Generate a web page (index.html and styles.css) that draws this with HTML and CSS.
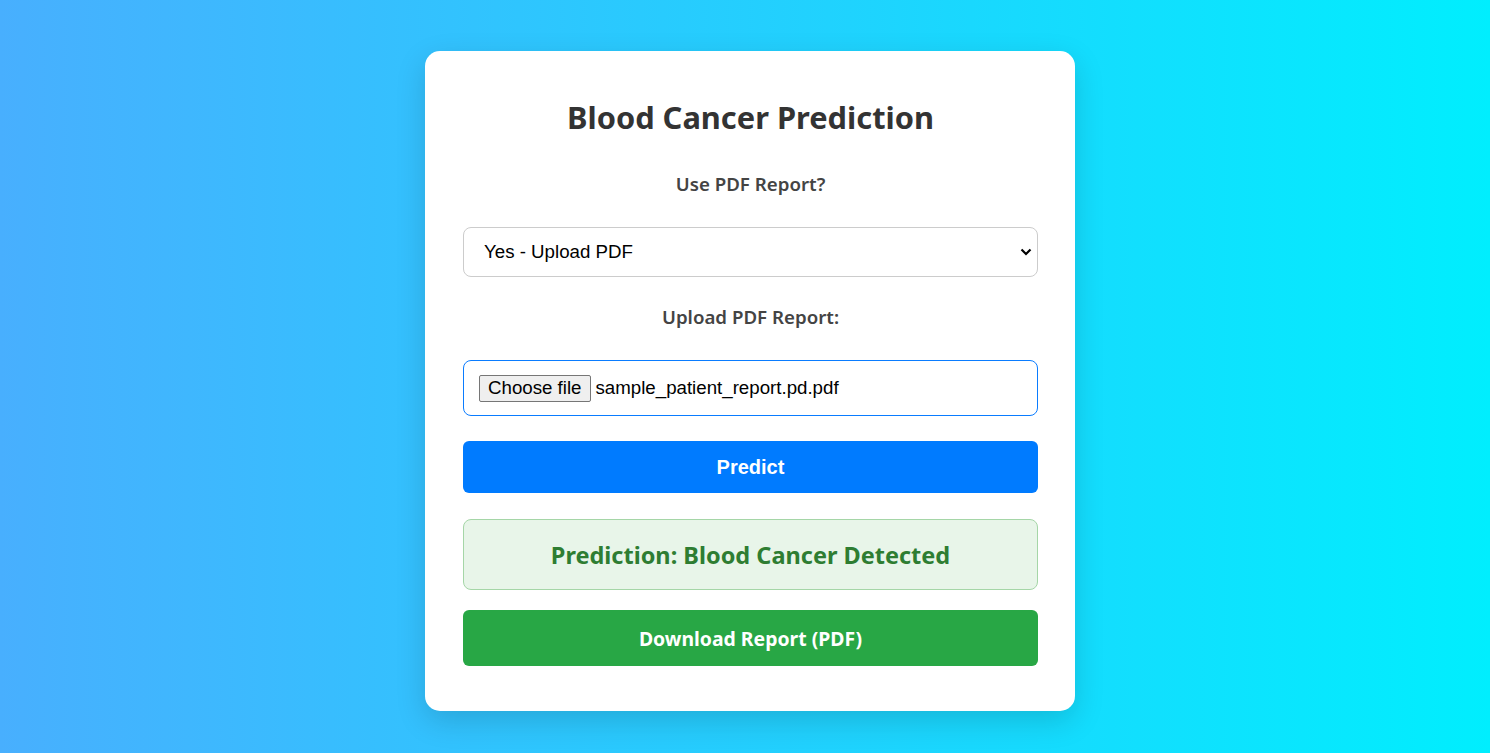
FILE: index.html
```html
<!DOCTYPE html>
<html lang="en">
<head>
<meta charset="utf-8">
<title>Blood Cancer Prediction</title>
<link rel="stylesheet" href="styles.css">
</head>
<body>
<div class="card">
  <h1 class="title">Blood Cancer Prediction</h1>
  <label class="label">Use PDF Report?</label>
  <div class="select-wrap">
    <select class="select">
      <option>Yes - Upload PDF</option>
      <option>No - Enter Manually</option>
    </select>
    <svg class="chev" width="12" height="8" viewBox="0 0 12 8"><path d="M1.5 1.5 L6 6 L10.5 1.5" fill="none" stroke="#000" stroke-width="2.2"/></svg>
  </div>
  <label class="label">Upload PDF Report:</label>
  <div class="file">
    <span class="file-btn">Choose file</span>
    <span class="file-name">sample_patient_report.pd.pdf</span>
  </div>
  <button class="btn btn-predict">Predict</button>
  <div class="result">Prediction: Blood Cancer Detected</div>
  <button class="btn btn-download">Download Report (PDF)</button>
</div>
</body>
</html>
```
FILE: styles.css
```css
html, body { margin: 0; padding: 0; }
body {
  min-height: 100vh;
  box-sizing: border-box;
  padding-left: 10px;
  background: linear-gradient(to right, #48affe, #00eefe);
  font-family: "Noto Sans", "Open Sans", sans-serif;
  overflow: hidden;
}
.card {
  width: 650px;
  box-sizing: border-box;
  margin: 51px auto 0;
  padding: 38px 37px 45px 38px;
  background: #fff;
  border-radius: 15px;
  box-shadow: 0 10px 30px rgba(0, 0, 0, 0.15);
  display: flex;
  flex-direction: column;
}
.title {
  margin: 6px 0 0;
  font-size: 30.8px;
  line-height: 44px;
  font-weight: 700;
  color: #333;
  text-align: center;
}
.label {
  display: block;
  text-align: center;
  font-size: 18.7px;
  line-height: 24px;
  font-weight: 600;
  color: #444;
  margin-top: 33px;
}
.label + .select-wrap, .label + .file { margin-top: 31px; }
.select-wrap { position: relative; }
.select {
  width: 100%;
  height: 50px;
  box-sizing: border-box;
  border: 1px solid #ccc;
  border-radius: 8px;
  background: #fff;
  font-family: "Liberation Sans", Arial, sans-serif;
  font-size: 18.7px;
  color: #000;
  padding: 0 20px 2px;
  appearance: none;
  -webkit-appearance: none;
}
.chev { position: absolute; right: 6px; top: 21px; }
.select-wrap + .label { margin-top: 28px; }
.file {
  height: 56px;
  box-sizing: border-box;
  border: 1px solid #0a7cff;
  border-radius: 8px;
  display: flex;
  align-items: center;
  padding: 0 15px;
  font-family: "Liberation Sans", Arial, sans-serif;
  font-size: 18.7px;
  color: #000;
}
.file-btn {
  height: 27px;
  box-sizing: border-box;
  display: flex;
  align-items: center;
  padding: 0 8px;
  background: #efefef;
  border: 1px solid #767676;
  border-radius: 2px;
  margin-right: 5px;
}
.btn {
  border: none;
  border-radius: 6px;
  color: #fff;
  font-weight: 700;
  width: 100%;
}
.btn-predict {
  margin-top: 25px;
  height: 52px;
  background: #007bff;
  font-family: "Liberation Sans", Arial, sans-serif;
  font-size: 20px;
}
.result {
  margin-top: 26px;
  height: 71px;
  box-sizing: border-box;
  border: 1px solid #a5d6a7;
  border-radius: 8px;
  background: #e8f5e9;
  color: #2e7d32;
  font-size: 23.5px;
  font-weight: 700;
  display: flex;
  align-items: center;
  justify-content: center;
}
.btn-download {
  margin-top: 20px;
  height: 56px;
  background: #28a745;
  font-family: "Noto Sans", "Open Sans", sans-serif;
  font-size: 19.4px;
}
```
